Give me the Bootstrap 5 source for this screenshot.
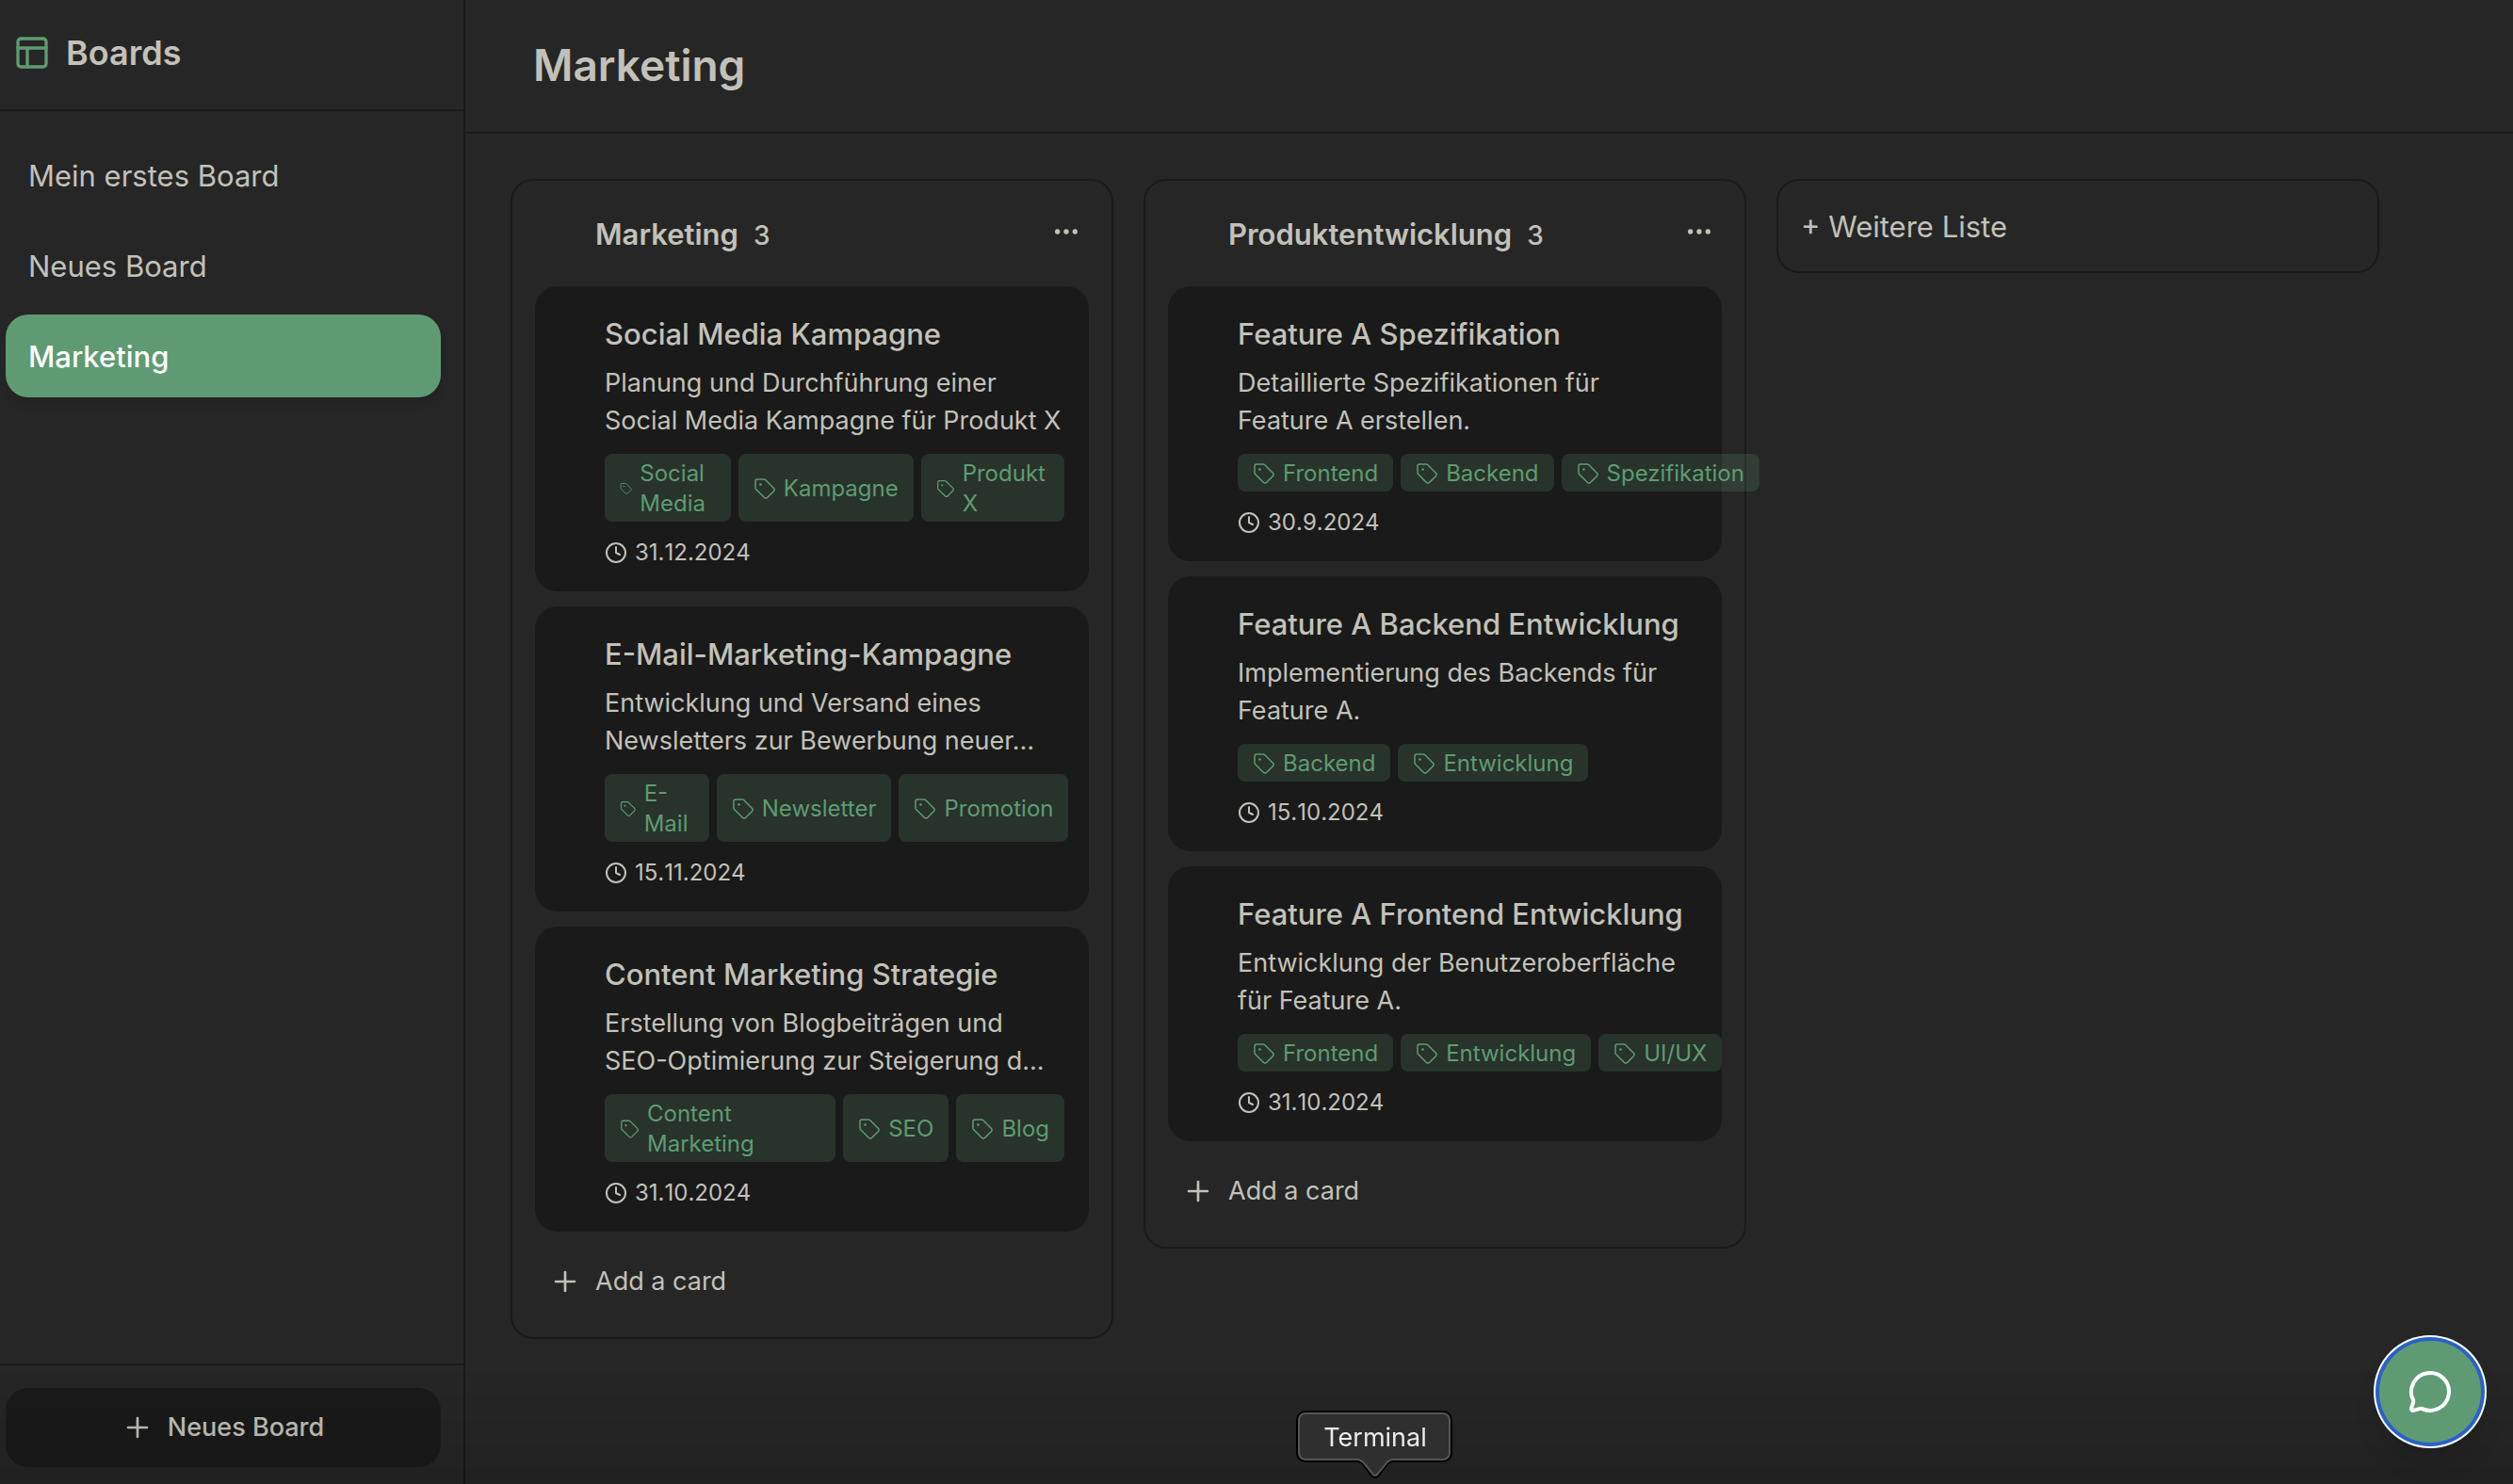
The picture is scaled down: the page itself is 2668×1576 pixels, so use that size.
<!DOCTYPE html>
<html lang="de">
<head>
<meta charset="utf-8">
<meta name="viewport" content="width=device-width, initial-scale=1">
<title>Marketing – Boards</title>
<link href="https://cdn.jsdelivr.net/npm/bootstrap@5.3.0/dist/css/bootstrap.min.css" rel="stylesheet">
<style>
  :root { --ground: #262626; --ink: #c2c1b9; --line: #1a1a1a; --panel: #1a1a1a; --green: #5f9b72; }
  body { background: var(--ground); color: var(--ink); font-family: Inter, "Liberation Sans", sans-serif; font-size: 27px; line-height: 40px; }
  svg { fill: none; stroke: currentColor; stroke-width: 2; stroke-linecap: round; stroke-linejoin: round; display: block; }
  button { color: inherit; }
  .app-shell { min-height: 100vh; }
  .side-pane { width: 494px; border-right: 2px solid var(--line); }
  .side-head { height: 118px; padding: 0 14px 4px; border-bottom: 2px solid var(--line); }
  .side-title { font-size: 36px; line-height: 56px; font-weight: 600; }
  .side-list { padding: 24px 24px 24px 6px; gap: 8px; }
  .side-list .nav-link { color: var(--ink); font-size: 31px; line-height: 48px; padding: 21px 24px 19px; border-radius: 24px; }
  .side-list .nav-link.active { background: var(--green); color: #fff; font-weight: 500; box-shadow: 0 8px 12px -2px rgba(0,0,0,.12); }
  .side-foot { padding: 24px 24px 18px 6px; border-top: 2px solid var(--line); }
  .new-board { height: 84px; border: 0; border-radius: 24px; background: var(--panel); font-weight: 500; gap: 16px; }
  .main-head { height: 142px; padding: 0 72px 2px; border-bottom: 2px solid var(--line); }
  .main-title { font-size: 46px; line-height: 64px; font-weight: 600; }
  .board-area { padding: 48px; gap: 32px; }
  .board-list { width: 640px; border: 2px solid var(--line); border-radius: 24px; padding: 24px; }
  .list-head { height: 88px; padding: 6px 0 0 64px; }
  .list-title { font-size: 31px; line-height: 54px; font-weight: 600; }
  .list-count { font-size: 28px; line-height: 56px; font-weight: 500; }
  .plain-btn { border: 0; background: none; padding: 8px; }
  .task-stack { gap: 16px; }
  .task-card { background: var(--panel); border-radius: 24px; padding: 26px 26px 25px 74px; }
  .task-title { font-size: 31px; line-height: 50px; font-weight: 500; margin-bottom: 7px; white-space: nowrap; }
  .task-text { margin-bottom: 15px; }
  .tag-row { gap: 8px; margin-bottom: 17px; font-size: 24px; line-height: 32px; }
  .tag-chip { padding: 5px 16px 3px; gap: 8px; border-radius: 8px; background: rgba(95,155,114,.2); color: var(--green); }
  .tag-chip svg { width: 24px; stroke-width: 1.5; }
  .due-date { gap: 8px; font-size: 24px; line-height: 32px; font-kerning: none; }
  .add-card { margin-top: 16px; height: 72px; border: 0; background: none; padding: 1px 16px 0; gap: 16px; }
  .add-list { width: 640px; height: 100px; border: 2px solid var(--line); border-radius: 24px; background: none; font-size: 31px; line-height: 48px; padding: 2px 24px 0; }
  .chat-fab { right: 34px; bottom: 44px; width: 108px; height: 108px; border: 0; border-radius: 50%; background: var(--green); color: #fff; box-shadow: 0 0 0 4px #2a61c9, 0 0 0 6px #fff, 0 20px 30px rgba(0,0,0,.1); }
  .dock-shade { left: 0; right: 0; bottom: 0; height: 120px; background: linear-gradient(rgba(0,0,0,0), rgba(0,0,0,.12)); pointer-events: none; }
  .dock-tip { left: 1376px; bottom: 4px; width: 168px; height: 74px; color: #ececec; padding-top: 9px; text-align: center; }
  .dock-tip svg { left: 0; top: 0; z-index: -1; }
</style>
<script src="https://cdn.jsdelivr.net/npm/bootstrap@5.3.0/dist/js/bootstrap.bundle.min.js"></script>
</head>
<body>
<svg class="d-none" aria-hidden="true">
  <symbol id="i-layout" viewBox="0 0 24 24"><rect x="3" y="3" width="18" height="18" rx="2"/><path d="M3 9h18M9 21V9"/></symbol>
  <symbol id="i-plus" viewBox="0 0 24 24"><path d="M12 4.5v15m7.500-7.500h-15"/></symbol>
  <symbol id="i-dots" viewBox="0 0 24 24"><circle cx="5" cy="12" r="1"/><circle cx="12" cy="12" r="1"/><circle cx="19" cy="12" r="1"/></symbol>
  <symbol id="i-tag" viewBox="0 0 24 24"><path d="M12.586 2.586A2 2 0 0 0 11.172 2H4a2 2 0 0 0-2 2v7.172a2 2 0 0 0 .586 1.414l8.704 8.704a2.426 2.426 0 0 0 3.420 0l6.580-6.580a2.426 2.426 0 0 0 0-3.420z"/><circle cx="7.500" cy="7.500" r=".6" fill="currentColor"/></symbol>
  <symbol id="i-clock" viewBox="0 0 24 24"><circle cx="12" cy="12" r="10"/><path d="M12 6v6l4 2"/></symbol>
  <symbol id="i-chat" viewBox="0 0 24 24"><path d="M2.992 16.342a2 2 0 0 1 .094 1.167l-1.065 3.290a1 1 0 0 0 1.236 1.168l3.413-.998a2 2 0 0 1 1.099.092 10 10 0 1 0-4.777-4.719"/></symbol>
</svg>

<div class="app-shell d-flex">
  <aside class="side-pane d-flex flex-column flex-shrink-0">
    <div class="side-head d-flex align-items-center gap-3">
      <svg width="40" height="40" color="#5f9b72"><use href="#i-layout"/></svg>
      <h2 class="side-title m-0">Boards</h2>
    </div>
    <nav class="side-list nav flex-column flex-nowrap flex-grow-1">
      <a class="nav-link" href="#">Mein erstes Board</a>
      <a class="nav-link" href="#">Neues Board</a>
      <a class="nav-link active" href="#" aria-current="page">Marketing</a>
    </nav>
    <div class="side-foot">
      <button type="button" class="new-board w-100 d-flex align-items-center justify-content-center">
        <svg width="32" height="32"><use href="#i-plus"/></svg>Neues Board
      </button>
    </div>
  </aside>

  <main class="flex-grow-1">
    <header class="main-head d-flex align-items-center"><h1 class="main-title m-0">Marketing</h1></header>
    <div class="board-area d-flex align-items-start">

      <section class="board-list flex-shrink-0">
        <div class="list-head d-flex align-items-start">
          <h3 class="list-title m-0 me-3">Marketing</h3><span class="list-count">3</span>
          <button type="button" class="plain-btn ms-auto" aria-label="Menü"><svg width="32" height="32"><use href="#i-dots"/></svg></button>
        </div>
        <div class="task-stack d-flex flex-column">
          <article class="task-card">
            <h4 class="task-title">Social Media Kampagne</h4>
            <p class="task-text">Planung und Durchführung einer Social Media Kampagne für Produkt X</p>
            <div class="tag-row d-flex">
              <span class="tag-chip d-flex align-items-center"><svg height="24"><use href="#i-tag"/></svg>Social Media</span>
              <span class="tag-chip d-flex align-items-center"><svg height="24"><use href="#i-tag"/></svg>Kampagne</span>
              <span class="tag-chip d-flex align-items-center"><svg height="24"><use href="#i-tag"/></svg>Produkt X</span>
            </div>
            <div class="due-date d-flex align-items-center"><svg width="24" height="24"><use href="#i-clock"/></svg>31.12.2024</div>
          </article>
          <article class="task-card">
            <h4 class="task-title">E-Mail-Marketing-Kampagne</h4>
            <p class="task-text">Entwicklung und Versand eines Newsletters zur Bewerbung neuer…</p>
            <div class="tag-row d-flex">
              <span class="tag-chip d-flex align-items-center"><svg height="24"><use href="#i-tag"/></svg>E-Mail</span>
              <span class="tag-chip d-flex align-items-center"><svg height="24"><use href="#i-tag"/></svg>Newsletter</span>
              <span class="tag-chip d-flex align-items-center"><svg height="24"><use href="#i-tag"/></svg>Promotion</span>
            </div>
            <div class="due-date d-flex align-items-center"><svg width="24" height="24"><use href="#i-clock"/></svg>15.11.2024</div>
          </article>
          <article class="task-card">
            <h4 class="task-title">Content Marketing Strategie</h4>
            <p class="task-text">Erstellung von Blogbeiträgen und SEO-Optimierung zur Steigerung d…</p>
            <div class="tag-row d-flex">
              <span class="tag-chip d-flex align-items-center"><svg height="24"><use href="#i-tag"/></svg>Content Marketing</span>
              <span class="tag-chip d-flex align-items-center"><svg height="24"><use href="#i-tag"/></svg>SEO</span>
              <span class="tag-chip d-flex align-items-center"><svg height="24"><use href="#i-tag"/></svg>Blog</span>
            </div>
            <div class="due-date d-flex align-items-center"><svg width="24" height="24"><use href="#i-clock"/></svg>31.10.2024</div>
          </article>
        </div>
        <button type="button" class="add-card d-flex align-items-center"><svg width="32" height="32"><use href="#i-plus"/></svg>Add a card</button>
      </section>

      <section class="board-list flex-shrink-0">
        <div class="list-head d-flex align-items-start">
          <h3 class="list-title m-0 me-3">Produktentwicklung</h3><span class="list-count">3</span>
          <button type="button" class="plain-btn ms-auto" aria-label="Menü"><svg width="32" height="32"><use href="#i-dots"/></svg></button>
        </div>
        <div class="task-stack d-flex flex-column">
          <article class="task-card">
            <h4 class="task-title">Feature A Spezifikation</h4>
            <p class="task-text">Detaillierte Spezifikationen für<br>Feature A erstellen.</p>
            <div class="tag-row d-flex">
              <span class="tag-chip d-flex align-items-center"><svg class="flex-shrink-0" height="24"><use href="#i-tag"/></svg>Frontend</span>
              <span class="tag-chip d-flex align-items-center"><svg class="flex-shrink-0" height="24"><use href="#i-tag"/></svg>Backend</span>
              <span class="tag-chip d-flex align-items-center"><svg class="flex-shrink-0" height="24"><use href="#i-tag"/></svg>Spezifikation</span>
            </div>
            <div class="due-date d-flex align-items-center"><svg width="24" height="24"><use href="#i-clock"/></svg>30.9.2024</div>
          </article>
          <article class="task-card">
            <h4 class="task-title">Feature A Backend Entwicklung</h4>
            <p class="task-text">Implementierung des Backends für Feature A.</p>
            <div class="tag-row d-flex">
              <span class="tag-chip d-flex align-items-center"><svg height="24"><use href="#i-tag"/></svg>Backend</span>
              <span class="tag-chip d-flex align-items-center"><svg height="24"><use href="#i-tag"/></svg>Entwicklung</span>
            </div>
            <div class="due-date d-flex align-items-center"><svg width="24" height="24"><use href="#i-clock"/></svg>15.10.2024</div>
          </article>
          <article class="task-card">
            <h4 class="task-title">Feature A Frontend Entwicklung</h4>
            <p class="task-text">Entwicklung der Benutzeroberfläche für Feature A.</p>
            <div class="tag-row d-flex">
              <span class="tag-chip d-flex align-items-center"><svg class="flex-shrink-0" height="24"><use href="#i-tag"/></svg>Frontend</span>
              <span class="tag-chip d-flex align-items-center"><svg class="flex-shrink-0" height="24"><use href="#i-tag"/></svg>Entwicklung</span>
              <span class="tag-chip d-flex align-items-center"><svg class="flex-shrink-0" height="24"><use href="#i-tag"/></svg>UI/UX</span>
            </div>
            <div class="due-date d-flex align-items-center"><svg width="24" height="24"><use href="#i-clock"/></svg>31.10.2024</div>
          </article>
        </div>
        <button type="button" class="add-card d-flex align-items-center"><svg width="32" height="32"><use href="#i-plus"/></svg>Add a card</button>
      </section>

      <button type="button" class="add-list flex-shrink-0 text-start">+ Weitere Liste</button>
    </div>
  </main>
</div>

<div class="dock-shade position-fixed"></div>
<button type="button" class="chat-fab position-fixed d-flex align-items-center justify-content-center p-0" aria-label="Chat"><svg width="48" height="48"><use href="#i-chat"/></svg></button>
<div class="dock-tip position-fixed" role="tooltip">
  <svg class="position-absolute" width="168" height="74" viewBox="0 0 168 74">
    <path d="M10 1.500H156a8.500 8.500 0 0 1 8.500 8.500V45a8.500 8.500 0 0 1-8.500 8.500H103q-4 0-7 4L87 69q-3 3-6 0L72 57.500q-3-4-7-4H10A8.500 8.500 0 0 1 1.500 45V10A8.500 8.500 0 0 1 10 1.500z" stroke="#000" stroke-width="3" fill="#2f2f2f"/>
    <path d="M10 3H156a7 7 0 0 1 7 7V45a7 7 0 0 1-7 7H103q-4 0-8 5L86 68q-2 2-4 0L73 57q-4-5-8-5H10A7 7 0 0 1 3 45V10A7 7 0 0 1 10 3z" stroke="#555" stroke-width="2" fill="#2f2f2f"/>
  </svg>
  Terminal
</div>
</body>
</html>
